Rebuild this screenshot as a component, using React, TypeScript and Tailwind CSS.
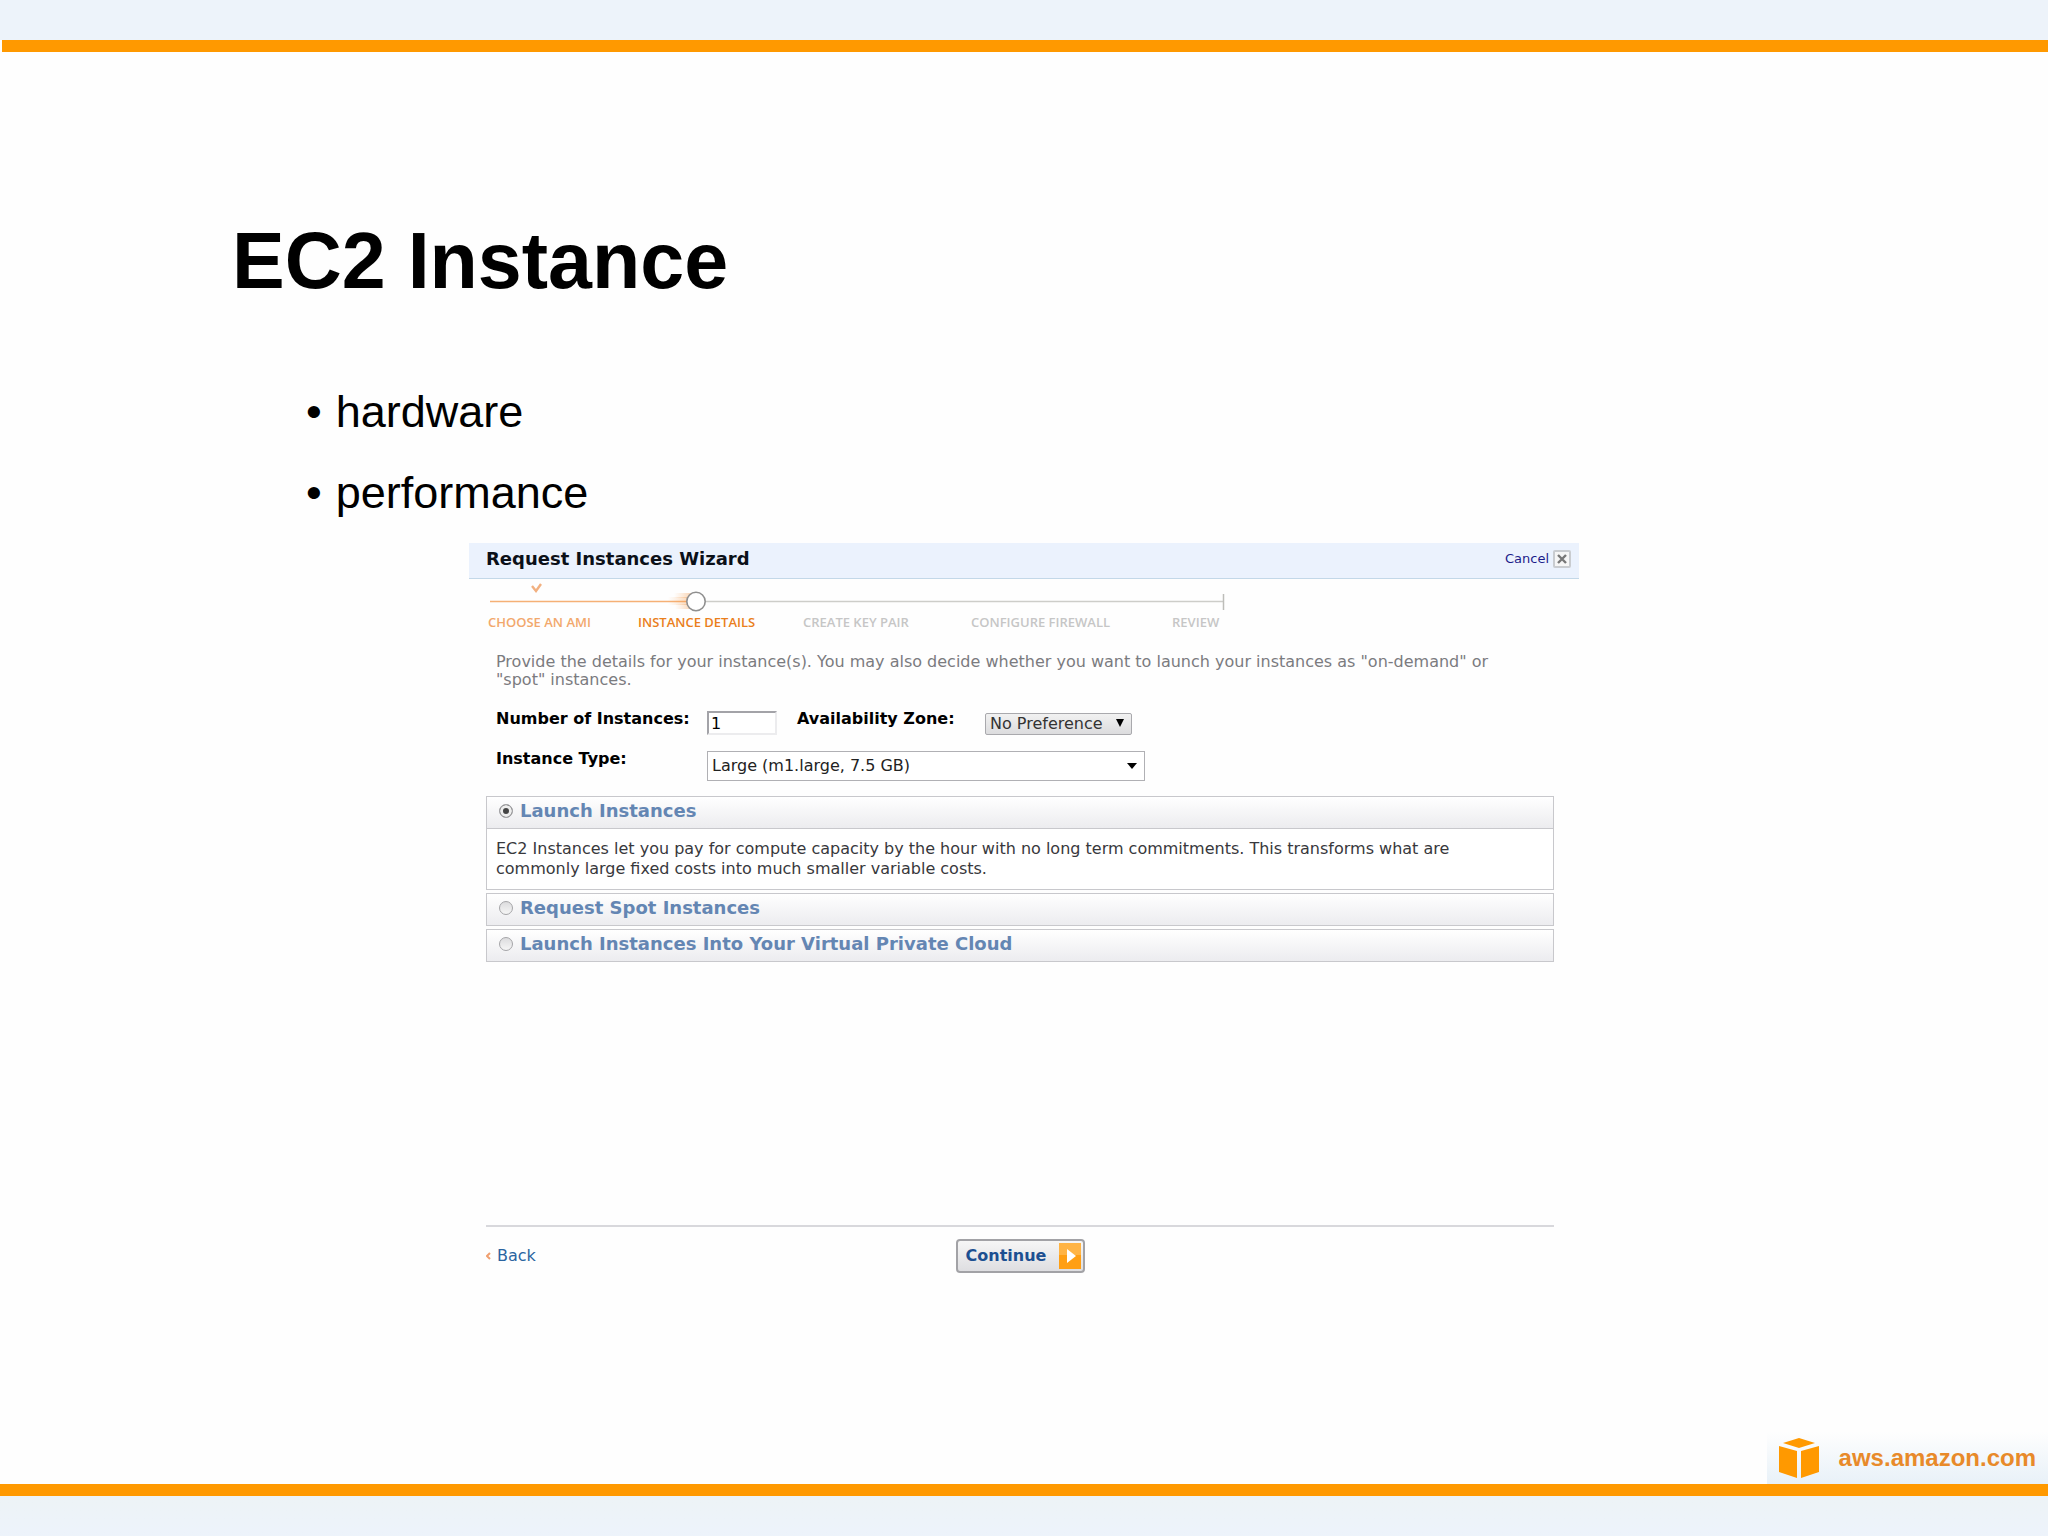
import { useState } from 'react'

const steps = [
  { label: 'CHOOSE AN AMI', color: 'text-[#f2a86c]' },
  { label: 'INSTANCE DETAILS', color: 'text-[#ea7f1c]' },
  { label: 'CREATE KEY PAIR', color: 'text-[#c6c6c6]' },
  { label: 'CONFIGURE FIREWALL', color: 'text-[#c6c6c6]' },
  { label: 'REVIEW', color: 'text-[#c6c6c6]' },
]

const launchModes = [
  {
    id: 'launch',
    title: 'Launch Instances',
    body: 'EC2 Instances let you pay for compute capacity by the hour with no long term commitments. This transforms what are commonly large fixed costs into much smaller variable costs.',
  },
  { id: 'spot', title: 'Request Spot Instances', body: '' },
  { id: 'vpc', title: 'Launch Instances Into Your Virtual Private Cloud', body: '' },
]

function StepTrack() {
  return (
    <svg className="block" width="740" height="34" viewBox="0 0 740 34" fill="none" aria-hidden="true">
      <defs>
        <linearGradient id="trail" x1="0" x2="1" y1="0" y2="0">
          <stop offset="0" stopColor="#f5a55c" stopOpacity="0" />
          <stop offset="1" stopColor="#f08c34" stopOpacity="0.5" />
        </linearGradient>
      </defs>
      <path d="M44 7l4 5 5-7" stroke="#f2b080" strokeWidth="2.400" />
      <path d="M2 22.500H200" stroke="#f5b075" strokeWidth="1.500" />
      <path d="M206 22.500H736" stroke="#cdcdc9" strokeWidth="1.500" />
      <path d="M735.500 15V31" stroke="#bdbdb9" strokeWidth="1.500" />
      <rect x="186" y="14" width="22" height="5" fill="url(#trail)" />
      <rect x="180" y="18" width="28" height="8" fill="url(#trail)" />
      <rect x="187" y="25" width="21" height="5" fill="url(#trail)" />
      <circle cx="208" cy="22.500" r="9.200" fill="#fff" stroke="#8f8f8f" strokeWidth="1.600" />
    </svg>
  )
}

function AwsCube() {
  return (
    <svg width="40" height="40" viewBox="0 0 40 40" fill="#ff9900" aria-hidden="true">
      <path d="M20 0L36 5L20 10L4 5Z" />
      <path d="M0 8L18 13V40L0 34Z" />
      <path d="M40 8L22 13V40L40 34Z" />
    </svg>
  )
}

function Wizard() {
  const [mode, setMode] = useState('launch')

  return (
    <section className="mx-auto mt-2.5 w-full max-w-[1110px] font-['DejaVu_Sans',sans-serif]">
      <header className="flex h-9 items-start justify-between border-b border-[#c3d8e8] bg-[#ebf2fd] pt-1 pr-2 pl-[17px]">
        <h2 className="text-lg leading-6 font-bold text-[#0b1018]">Request Instances Wizard</h2>
        <button type="button" className="flex items-center gap-1 text-[13px] leading-6 text-[#1c1c8a]">
          Cancel
          <span className="flex size-[18px] items-center justify-center rounded-xs border-2 border-[#c9ccd0] bg-[#f6f6f6]">
            <svg width="10" height="10" viewBox="0 0 10 10" stroke="#777" strokeWidth="2.400" aria-hidden="true">
              <path d="M1 1L9 9M9 1L1 9" />
            </svg>
          </span>
        </button>
      </header>

      <div className="pl-[19px]">
        <StepTrack />
        <ol className="grid grid-cols-[150px_165px_168px_201px_auto] font-['Open_Sans',sans-serif] text-[13px] leading-[18px] font-semibold">
          {steps.map((step) => (
            <li key={step.label} className={`whitespace-nowrap ${step.color}`}>{step.label}</li>
          ))}
        </ol>
      </div>

      <p className="mt-[22px] pr-16 pl-[27px] text-base leading-[18px] text-[#7b7b7f]">
        Provide the details for your instance(s). You may also decide whether you want to launch your instances as "on-demand" or "spot" instances.
      </p>

      <div className="mt-[22px] flex items-start pl-[27px]">
        <label htmlFor="count" className="w-[211px] text-base leading-4 font-bold">Number of Instances:</label>
        <input id="count" defaultValue="1" className="h-6 w-[70px] border-2 border-t-[#a3a3a8] border-r-[#ececee] border-b-[#ececee] border-l-[#a3a3a8] bg-white px-0.5 text-base leading-5" />
        <label htmlFor="zone" className="ml-5 w-[188px] text-base leading-4 font-bold">Availability Zone:</label>
        <div className="relative mt-0.5">
          <select id="zone" className="block h-[22px] w-[147px] appearance-none rounded-xs border border-[#a9a9ad] bg-linear-to-b from-[#f1f1f1] to-[#dcdcde] pl-1 text-base leading-5 text-[#333]">
            <option>No Preference</option>
          </select>
          <svg className="pointer-events-none absolute top-1.5 right-2" width="8" height="8" viewBox="0 0 8 8" aria-hidden="true">
            <path d="M0 0H8L4 8Z" />
          </svg>
        </div>
      </div>

      <div className="mt-4 flex items-start pl-[27px]">
        <label htmlFor="type" className="w-[211px] text-base leading-4 font-bold">Instance Type:</label>
        <div className="relative">
          <select id="type" className="block h-[30px] w-[438px] appearance-none border border-[#b0b0b4] bg-white pl-1 text-base leading-6 text-[#222]">
            <option>Large (m1.large, 7.5 GB)</option>
          </select>
          <svg className="pointer-events-none absolute top-3 right-2" width="10" height="6" viewBox="0 0 10 6" aria-hidden="true">
            <path d="M0 0H10L5 6Z" />
          </svg>
        </div>
      </div>

      <div className="mt-[15px] mr-[25px] ml-[17px] flex flex-col gap-[3px]">
        {launchModes.map((item) => (
          <div key={item.id} className="border border-[#c8c8cc]">
            <label className="flex h-[31px] items-center gap-[7px] bg-linear-to-b from-white to-[#ececef] pb-1 pl-3 text-lg leading-6 font-bold text-[#6486b3]">
              <input
                type="radio"
                name="mode"
                checked={mode === item.id}
                onChange={() => setMode(item.id)}
                className="size-3.5 appearance-none rounded-full border border-[#a5a5a8] bg-linear-to-b from-[#dcdcde] to-[#f6f6f6] checked:bg-[#444] checked:bg-none checked:shadow-[inset_0_0_0_3px_#eee]"
              />
              {item.title}
            </label>
            {item.body && mode === item.id && (
              <p className="border-t border-[#c8c8cc] bg-white px-[9px] py-2.5 text-base leading-5 text-[#38383c]">
                <span className="block max-w-[980px]">{item.body}</span>
              </p>
            )}
          </div>
        ))}
      </div>

      <footer className="mt-[263px] mr-[25px] ml-[17px] grid grid-cols-3 items-center border-t-2 border-[#d8d8dc] pt-3">
        <a href="#back" className="flex items-center gap-1.5 text-base leading-6 text-[#2a64a0]">
          <svg width="5" height="8" viewBox="0 0 5 8" fill="none" stroke="#f0a070" strokeWidth="2" aria-hidden="true">
            <path d="M4 1L1 4L4 7" />
          </svg>
          Back
        </a>
        <button type="button" className="flex h-[34px] w-[129px] items-center justify-between justify-self-center rounded-sm border-2 border-[#a2a2a6] bg-linear-to-b from-[#f6f6f6] to-[#dedee1] pr-0.5 pl-2 text-base font-bold text-[#1c4f91]">
          Continue
          <svg width="22" height="26" viewBox="0 0 22 26" aria-hidden="true">
            <rect width="22" height="26" fill="#ff9f14" />
            <rect width="22" height="12" fill="#ffb445" />
            <path d="M8 6L17 13L8 20Z" fill="#fff" />
          </svg>
        </button>
      </footer>
    </section>
  )
}

export default function App() {
  return (
    <div className="flex min-h-screen flex-col bg-[#fefefe] font-['Liberation_Sans',sans-serif] text-black">
      <div className="h-10 bg-[#edf3fa]" />
      <div className="ml-0.5 h-3 bg-[#ff9900]" />

      <main className="flex-1 pt-[165px]">
        <h1 className="pl-[232px] text-[79px] leading-[88px] font-bold">EC2 Instance</h1>
        <ul className="mt-[66px] pl-[306px] text-[45px] leading-[81px]">
          {['hardware', 'performance'].map((item) => (
            <li key={item} className="flex gap-3.5">
              <span>•</span>
              {item}
            </li>
          ))}
        </ul>
        <Wizard />
      </main>

      <div className="flex items-center self-end bg-linear-to-b from-[#fefefe] to-[#e8f1f8] py-1.5 pr-3 pl-3">
        <AwsCube />
        <a href="#aws" className="pl-5 text-2xl leading-10 font-bold text-[#e88a2a]">aws.amazon.com</a>
      </div>
      <div className="h-3 bg-[#ff9900]" />
      <div className="h-10 bg-linear-to-b from-[#edf3f6] to-[#edf3fb]" />
    </div>
  )
}
